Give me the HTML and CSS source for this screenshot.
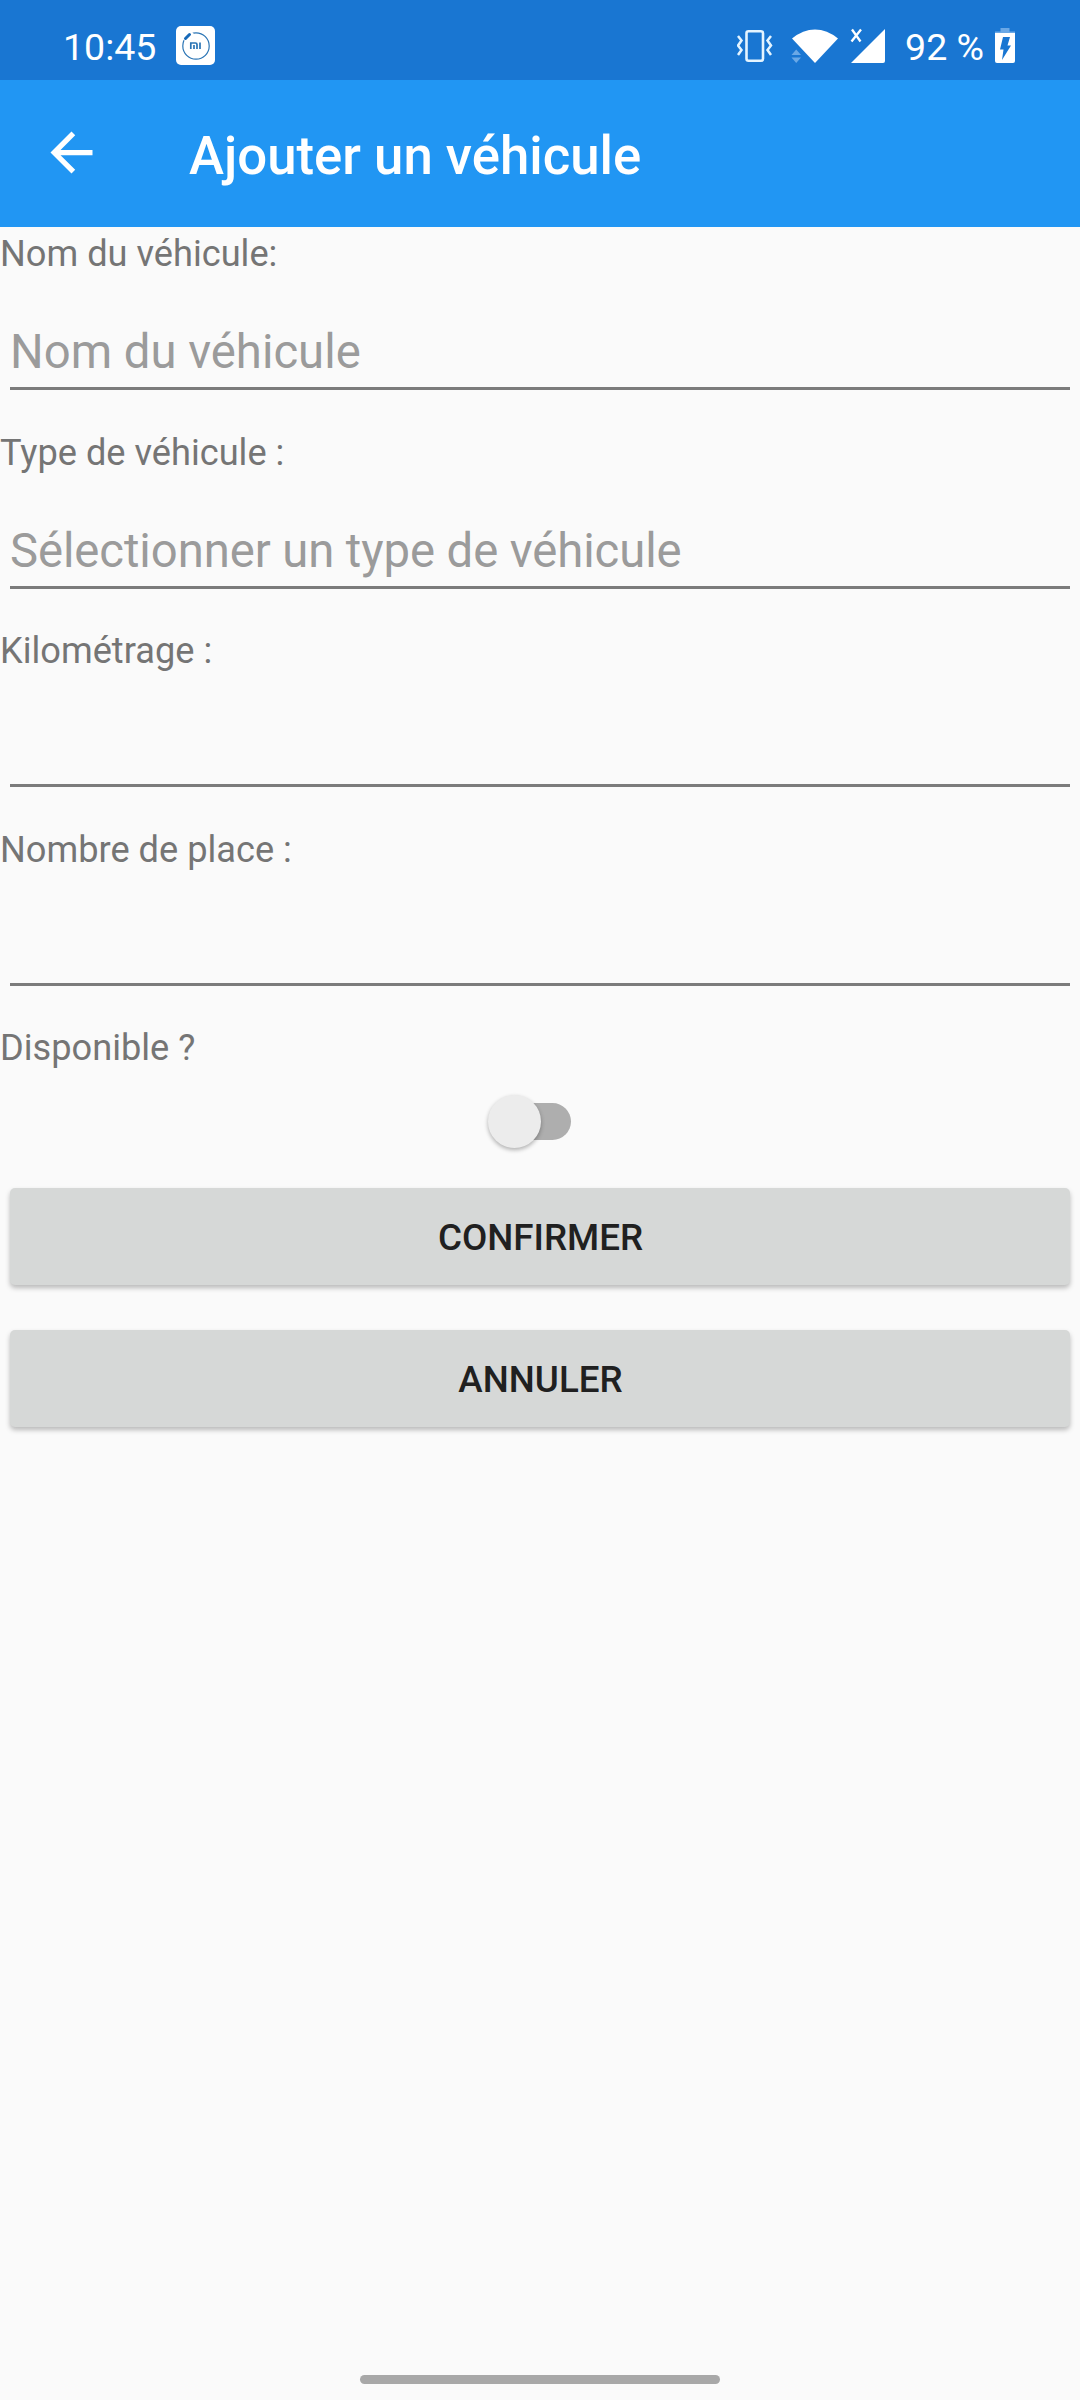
FILE: index.html
```
<!DOCTYPE html>
<html lang="fr">
<head>
<meta charset="utf-8">
<title>Ajouter un véhicule</title>
<link rel="stylesheet" href="styles.css">
</head>
<body>
<div class="status">
  <span class="time">10:45</span>
  <svg class="mi" width="39" height="39" viewBox="0 0 39 39"><rect width="39" height="39" rx="5" fill="#fff"/><circle cx="20" cy="20" r="13.2" fill="none" stroke="#2b75b5" stroke-width="1.2"/><path d="M8 14l8-8" stroke="#fff" stroke-width="7"/><path d="M9.5 12.5l4-4" stroke="#1769b8" stroke-width="3" stroke-linecap="round"/><path d="M14.8 23v-6h4.7q1.5 0 1.5 1.5V23M18 19v4M24 16.5V23" fill="none" stroke="#2b75b5" stroke-width="1.7"/></svg>
  <span class="spacer"></span>
  <svg class="signals" width="151" height="38" viewBox="0 0 151 38" fill="#fff">
    <rect x="9.5" y="4.2" width="16.5" height="29.5" rx="2" fill="none" stroke="#e4f4ff" stroke-width="2.6"/>
    <path d="M1 9l3.5 4.5L1 18.500l3.500 4.500L1 28M34 9l-3.500 4.500 3.500 5-3.500 4.500 3.500 5" fill="none" stroke="#e4f4ff" stroke-width="2.5"/>
    <path d="M55 11.500Q66 2.500 78 2.500t23 9L78 36z"/>
    <path d="M54.500 28l4.700-5.500L64 28zM54.500 30.500H64L59.200 36z" fill="#6aa8e6"/>
    <path d="M148 2v32q0 2-2 2h-32z"/>
    <path d="M115 2.500l8.500 12M124 2.500l-9.500 12" stroke="#fff" stroke-width="2.300"/>
  </svg>
  <span class="level">92 %</span>
  <svg class="battery" width="20" height="35" viewBox="0 0 20 35"><path d="M0 5V3.500h5.500V0h9v3.500H20V5z" fill="#6aa8e6"/><path d="M0 5h20v28q0 2-2 2H2q-2 0-2-2z" fill="#fff"/><path d="M8 9h7l-2.500 8.500H16L7 32l1.500-10.500H5z" fill="#1976d2"/></svg>
</div>
<header class="bar">
  <svg class="back" width="63" height="63" viewBox="0 0 24 24"><path fill="#fff" d="M20 11H7.830l5.590-5.590L12 4l-8 8 8 8 1.410-1.410L7.830 13H20v-2z"/></svg>
  <h1>Ajouter un véhicule</h1>
</header>
<main>
  <div class="label">Nom du véhicule:</div>
  <div class="field">Nom du véhicule</div>
  <div class="label">Type de véhicule :</div>
  <div class="field select">Sélectionner un type de véhicule</div>
  <div class="label">Kilométrage :</div>
  <div class="field"></div>
  <div class="label">Nombre de place :</div>
  <div class="field"></div>
  <div class="label">Disponible ?</div>
  <div class="switch"><span class="thumb"></span></div>
  <div class="actions"><button>CONFIRMER</button><button>ANNULER</button></div>
</main>
<div class="home"></div>
</body>
</html>
```
FILE: styles.css
```
* { box-sizing: border-box; }
body { margin: 0; background: #fafafa; font-family: Roboto, sans-serif; height: 2400px; display: flex; flex-direction: column; }
.status { height: 80px; background: #1976d2; color: #fff; display: flex; align-items: flex-start; font-size: 37.5px; line-height: 44px; padding: 26px 65px 0 63px; }
.status svg { flex: none; }
.spacer { flex: 1; }
.time, .level { margin-top: -1px; white-space: nowrap; }
.mi { margin-left: 20px; }
.signals { margin-top: 1px; }
.level { margin-left: 17px; }
.battery { margin: 2px 0 0 11px; }
.bar { height: 147px; background: #2196f3; display: flex; align-items: center; color: #fff; padding-left: 40px; }
.back { margin-bottom: 2px; }
h1 { font-size: 52.75px; line-height: 60px; font-weight: 500; margin: 5px 0 0 86px; }
main { flex: 1; }
.label { height: 53px; line-height: 53px; font-size: 36.2px; color: #757575; }
.field { margin: 0 10px 35.5px; height: 110px; border-bottom: 3px solid #7b7b7b; font-size: 47.25px; line-height: 144px; color: #9b9b9b; }
.select { letter-spacing: -0.08px; }
.switch { width: 71px; height: 37px; margin: 29px 0 0 500px; border-radius: 19px; background: #aeaeae; display: flex; align-items: center; }
.thumb { flex: none; width: 53px; height: 53px; margin-left: -12px; border-radius: 50%; background: #ececec; box-shadow: 0 2px 4px rgba(0,0,0,.3); }
.actions { display: flex; flex-direction: column; gap: 45px; padding: 48px 10px 0; }
button { height: 97px; border: 0; border-radius: 5px; background: #d6d8d7; color: #202020; font: 500 36.75px Roboto, sans-serif; box-shadow: 0 3px 5px rgba(0,0,0,.26); padding: 2px 0 0 1px; }
.home { width: 360px; height: 9px; border-radius: 5px; background: #a8a8a8; margin: 0 auto 16px; }
```
